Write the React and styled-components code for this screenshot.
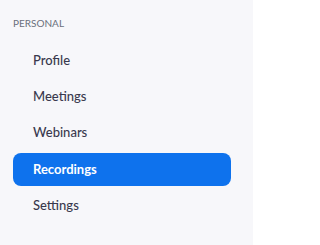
import React from "react";
import styled, { createGlobalStyle } from "styled-components";

const GlobalStyle = createGlobalStyle`
  html, body {
    margin: 0;
    padding: 0;
    background: #ffffff;
  }
  body {
    font-family: Lato, "Open Sans", sans-serif;
  }
`;

const Sidebar = styled.nav`
  width: 253px;
  height: 245px;
  box-sizing: border-box;
  background: #f7f7fa;
  padding: 0 22px 0 13px;
`;

const SectionTitle = styled.div`
  height: 44px;
  box-sizing: border-box;
  padding-top: 17px;
  font-size: 10px;
  line-height: 12px;
  color: #6a6f7b;
`;

const List = styled.ul`
  list-style: none;
  margin: 0;
  padding: 0;
  display: flex;
  flex-direction: column;
  gap: 3.4px;
`;

const Item = styled.li`
  height: 33px;
  box-sizing: border-box;
  display: flex;
  align-items: center;
  padding: 0 0 2px 20px;
  border-radius: 8px;
  font-size: 13px;
  font-weight: ${props => props.active ? 700 : 500};
  color: ${props => props.active ? "#ffffff" : "#39394d"};
  background: ${props => props.active ? "#0e72ed" : "transparent"};
`;

const ITEMS = ["Profile", "Meetings", "Webinars", "Recordings", "Settings"];

export default function App() {
  return (
    <>
      <GlobalStyle />
      <Sidebar>
        <SectionTitle>PERSONAL</SectionTitle>
        <List>
          {ITEMS.map(name => (
            <Item key={name} active={name === "Recordings"}>{name}</Item>
          ))}
        </List>
      </Sidebar>
    </>
  );
}
